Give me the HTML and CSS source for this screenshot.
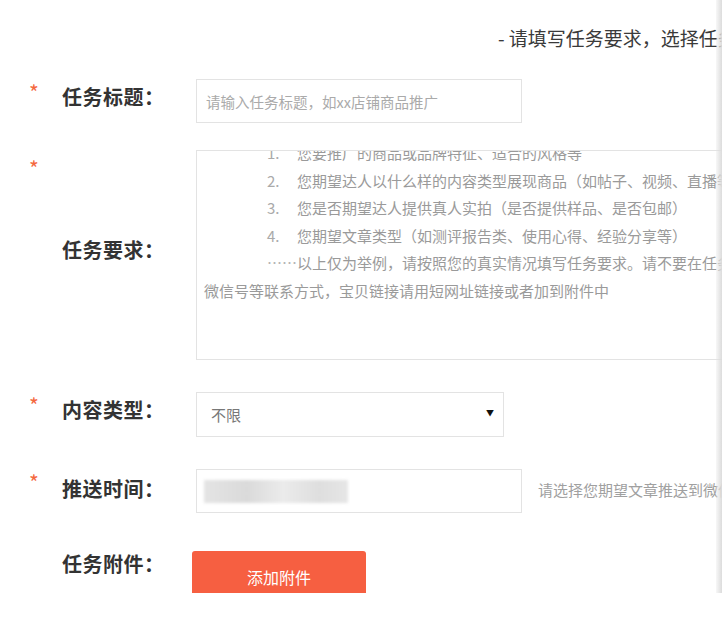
FILE: index.html
```html
<!DOCTYPE html>
<html lang="zh-CN">
<head>
  <meta charset="UTF-8">
  <meta name="viewport" content="width=device-width, initial-scale=1.0">
  <title>发布任务</title>
  <link rel="stylesheet" href="styles.css">
</head>
<body>
  <div class="page">
    <p class="note">- 请填写任务要求，选择任务类型和推送时间</p>
    <form class="task-form">
      <div class="row">
        <span class="req">*</span>
        <label class="label" for="title">任务标题：</label>
        <input class="field" id="title" type="text" placeholder="请输入任务标题，如xx店铺商品推广">
      </div>

      <div class="row row-desc">
        <span class="req">*</span>
        <label class="label">任务要求：</label>
        <div class="field area">
          <div class="area-text">
            <ol class="tips">
              <li><span class="num">1.</span>您要推广的商品或品牌特征、适合的风格等</li>
              <li><span class="num">2.</span>您期望达人以什么样的内容类型展现商品（如帖子、视频、直播等）</li>
              <li><span class="num">3.</span>您是否期望达人提供真人实拍（是否提供样品、是否包邮）</li>
              <li><span class="num">4.</span>您期望文章类型（如测评报告类、使用心得、经验分享等）</li>
            </ol>
            <p class="more"><span class="dots">……</span>以上仅为举例，请按照您的真实情况填写任务要求。请不要在任务要求中填写手机号、<br>微信号等联系方式，宝贝链接请用短网址链接或者加到附件中</p>
          </div>
        </div>
      </div>

      <div class="row row-type">
        <span class="req">*</span>
        <label class="label">内容类型：</label>
        <div class="field select">
          <span>不限</span>
          <span class="arrow">▼</span>
        </div>
      </div>

      <div class="row row-time">
        <span class="req">*</span>
        <label class="label">推送时间：</label>
        <div class="field date"><span class="blur"></span></div>
        <span class="hint">请选择您期望文章推送到微信公众号的时间</span>
      </div>

      <div class="row row-file">
        <span class="req"></span>
        <label class="label">任务附件：</label>
        <button type="button" class="btn-add">添加附件</button>
      </div>
    </form>
  </div>
</body>
</html>
```

FILE: styles.css
```css
body {
  margin: 0;
  font-family: "Noto Sans CJK SC", "Noto Sans", sans-serif;
  background: #fff;
  color: #333;
}
.page {
  position: relative;
  height: 593px;
  overflow: hidden;
}
.page::after {
  content: "";
  position: absolute;
  top: 0;
  right: 0;
  bottom: 0;
  width: 6px;
  background: linear-gradient(to right, rgba(230, 230, 230, 0.3), #dcdcdc);
}
.note {
  margin: 0;
  padding: 24px 0 0 498px;
  font-size: 19px;
  line-height: 28px;
  white-space: nowrap;
  color: #3a3a3a;
}
.task-form {
  display: flex;
  flex-direction: column;
  gap: 32px;
  margin-top: 27px;
}
.row {
  display: flex;
  align-items: flex-start;
  padding-left: 29px;
}
.req {
  width: 33px;
  flex-shrink: 0;
  margin-top: 2px;
  font-size: 21px;
  line-height: 22px;
  color: #f4683f;
}
.label {
  width: 134px;
  flex-shrink: 0;
  margin-top: 4px;
  font-size: 20px;
  line-height: 28px;
  font-weight: bold;
  letter-spacing: 0.5px;
  color: #333;
}
.field {
  box-sizing: border-box;
  width: 326px;
  height: 44px;
  border: 1px solid #e3e3e3;
  background: #fff;
  flex-shrink: 0;
}
input.field {
  padding: 0 9px;
  font-family: inherit;
  font-size: 14.5px;
  outline: none;
}
input.field::placeholder {
  color: #aaa;
}

/* 任务要求 */
.row-desc {
  margin-top: -5px;
}
.row-desc .req {
  margin-top: 7px;
}
.row-desc .label {
  align-self: center;
  margin: 0 0 10px;
}
.area {
  width: 560px;
  height: 210px;
  padding: 0 7px;
  overflow: hidden;
}
.area-text {
  margin-top: -12px;
  font-size: 15px;
  line-height: 27.5px;
  color: #9a9a9a;
  white-space: nowrap;
}
.tips {
  list-style: none;
  margin: 0;
  padding: 0;
}
.tips li {
  display: flex;
  padding-left: 63px;
}
.num {
  width: 30px;
  color: #aaa;
}
.more {
  margin: 0;
  text-indent: 63px;
}
.dots {
  color: #b5b5b5;
}

/* 内容类型 */
.select {
  width: 308px;
  height: 45px;
  display: flex;
  align-items: center;
  justify-content: space-between;
  padding: 0 9px 0 14px;
  font-size: 15px;
  color: #777;
}
.arrow {
  font-size: 8px;
  color: #111;
  margin-top: -4px;
}

/* 推送时间 */
.row-time .label {
  margin-top: 6px;
}
.date {
  padding: 10px 0 0 7px;
}
.blur {
  display: block;
  width: 144px;
  height: 23px;
  background: linear-gradient(to right, #e4e4e4, #dadada 30%, #ebebeb 55%, #dedede 80%, #e6e6e6);
  filter: blur(1.5px);
}
.hint {
  margin: 11px 0 0 16px;
  font-size: 15px;
  line-height: 20px;
  color: #a0a0a0;
  white-space: nowrap;
}

/* 任务附件 */
.row-file {
  margin-top: 6px;
}
.row-file .label {
  margin-top: -1px;
}
.btn-add {
  width: 174px;
  height: 52px;
  margin-left: -4px;
  border: none;
  border-radius: 3px;
  background: #f65f41;
  color: #fff;
  font-family: inherit;
  font-size: 16px;
  cursor: pointer;
}
```
